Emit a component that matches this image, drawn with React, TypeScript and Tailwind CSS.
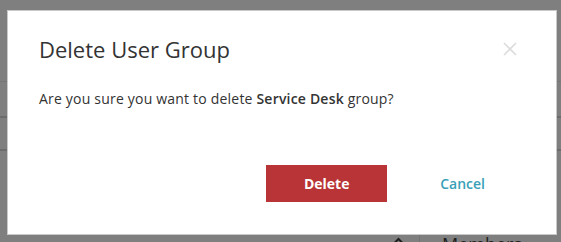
import React from "react";

export default function App() {
  const font = { fontFamily: '"Open Sans", "Noto Sans", sans-serif' };
  return (
    <div
      className="relative w-[561px] h-[242px] overflow-hidden bg-[#7f7f7f]"
      style={font}
    >
      {/* underlying page, dimmed by backdrop */}
      <div className="flex flex-col w-full h-full">
        <div className="h-[81px] shrink-0" />
        <div className="h-[1px] shrink-0 bg-[#757575]" />
        <div className="h-[34px] shrink-0" />
        <div className="h-[2px] shrink-0 bg-[#6c6c6c]" />
        <div className="h-[31px] shrink-0" />
        <div className="h-[2px] shrink-0 bg-[#6c6c6c]" />
        <div className="h-[78px] shrink-0" />
        <div className="flex flex-row h-[40px] shrink-0">
          <div className="w-[392px] shrink-0" />
          <div className="w-[27px] shrink-0 flex justify-start pt-[8px]">
            <svg width="13" height="8" viewBox="0 0 13 8">
              <path d="M1.5 7 L6.5 2 L11.5 7" fill="none" stroke="#1e1e1e" strokeWidth="2" />
            </svg>
          </div>
          <div className="w-[1px] shrink-0 bg-[#727272]" />
          <div className="pl-[22px] pt-[3px] text-[18px] leading-[24px] text-[#1e1e1e]">
            Members
          </div>
        </div>
      </div>

      {/* modal */}
      <div className="absolute left-[7px] top-[10px] w-[550px] h-[225px] bg-white border border-[#c9c9c9] flex flex-col">
        <div className="flex flex-row justify-between items-start pt-[23px] pl-[31px] pr-[39px]">
          <div className="text-[22px] leading-[30px] text-[#333333]">
            Delete User Group
          </div>
          <svg className="mt-[8px]" width="14" height="14" viewBox="0 0 14 14">
            <path d="M1 1 L13 13 M13 1 L1 13" stroke="#dcdcdc" strokeWidth="1.6" fill="none" />
          </svg>
        </div>
        <div className="pl-[31px] mt-[25px] text-[14px] leading-[20px] tracking-[0.2px] text-[#333333]">
          Are you sure you want to delete <span className="font-semibold">Service Desk</span> group?
        </div>
        <div className="flex flex-row justify-end items-center mt-[56px] pr-[71px] gap-[53px]">
          <button className="w-[121px] h-[37px] bg-[#b93436] text-white text-[14px] font-bold">
            Delete
          </button>
          <button className="text-[14px] font-semibold text-[#3a9fb8]">Cancel</button>
        </div>
      </div>
    </div>
  );
}
